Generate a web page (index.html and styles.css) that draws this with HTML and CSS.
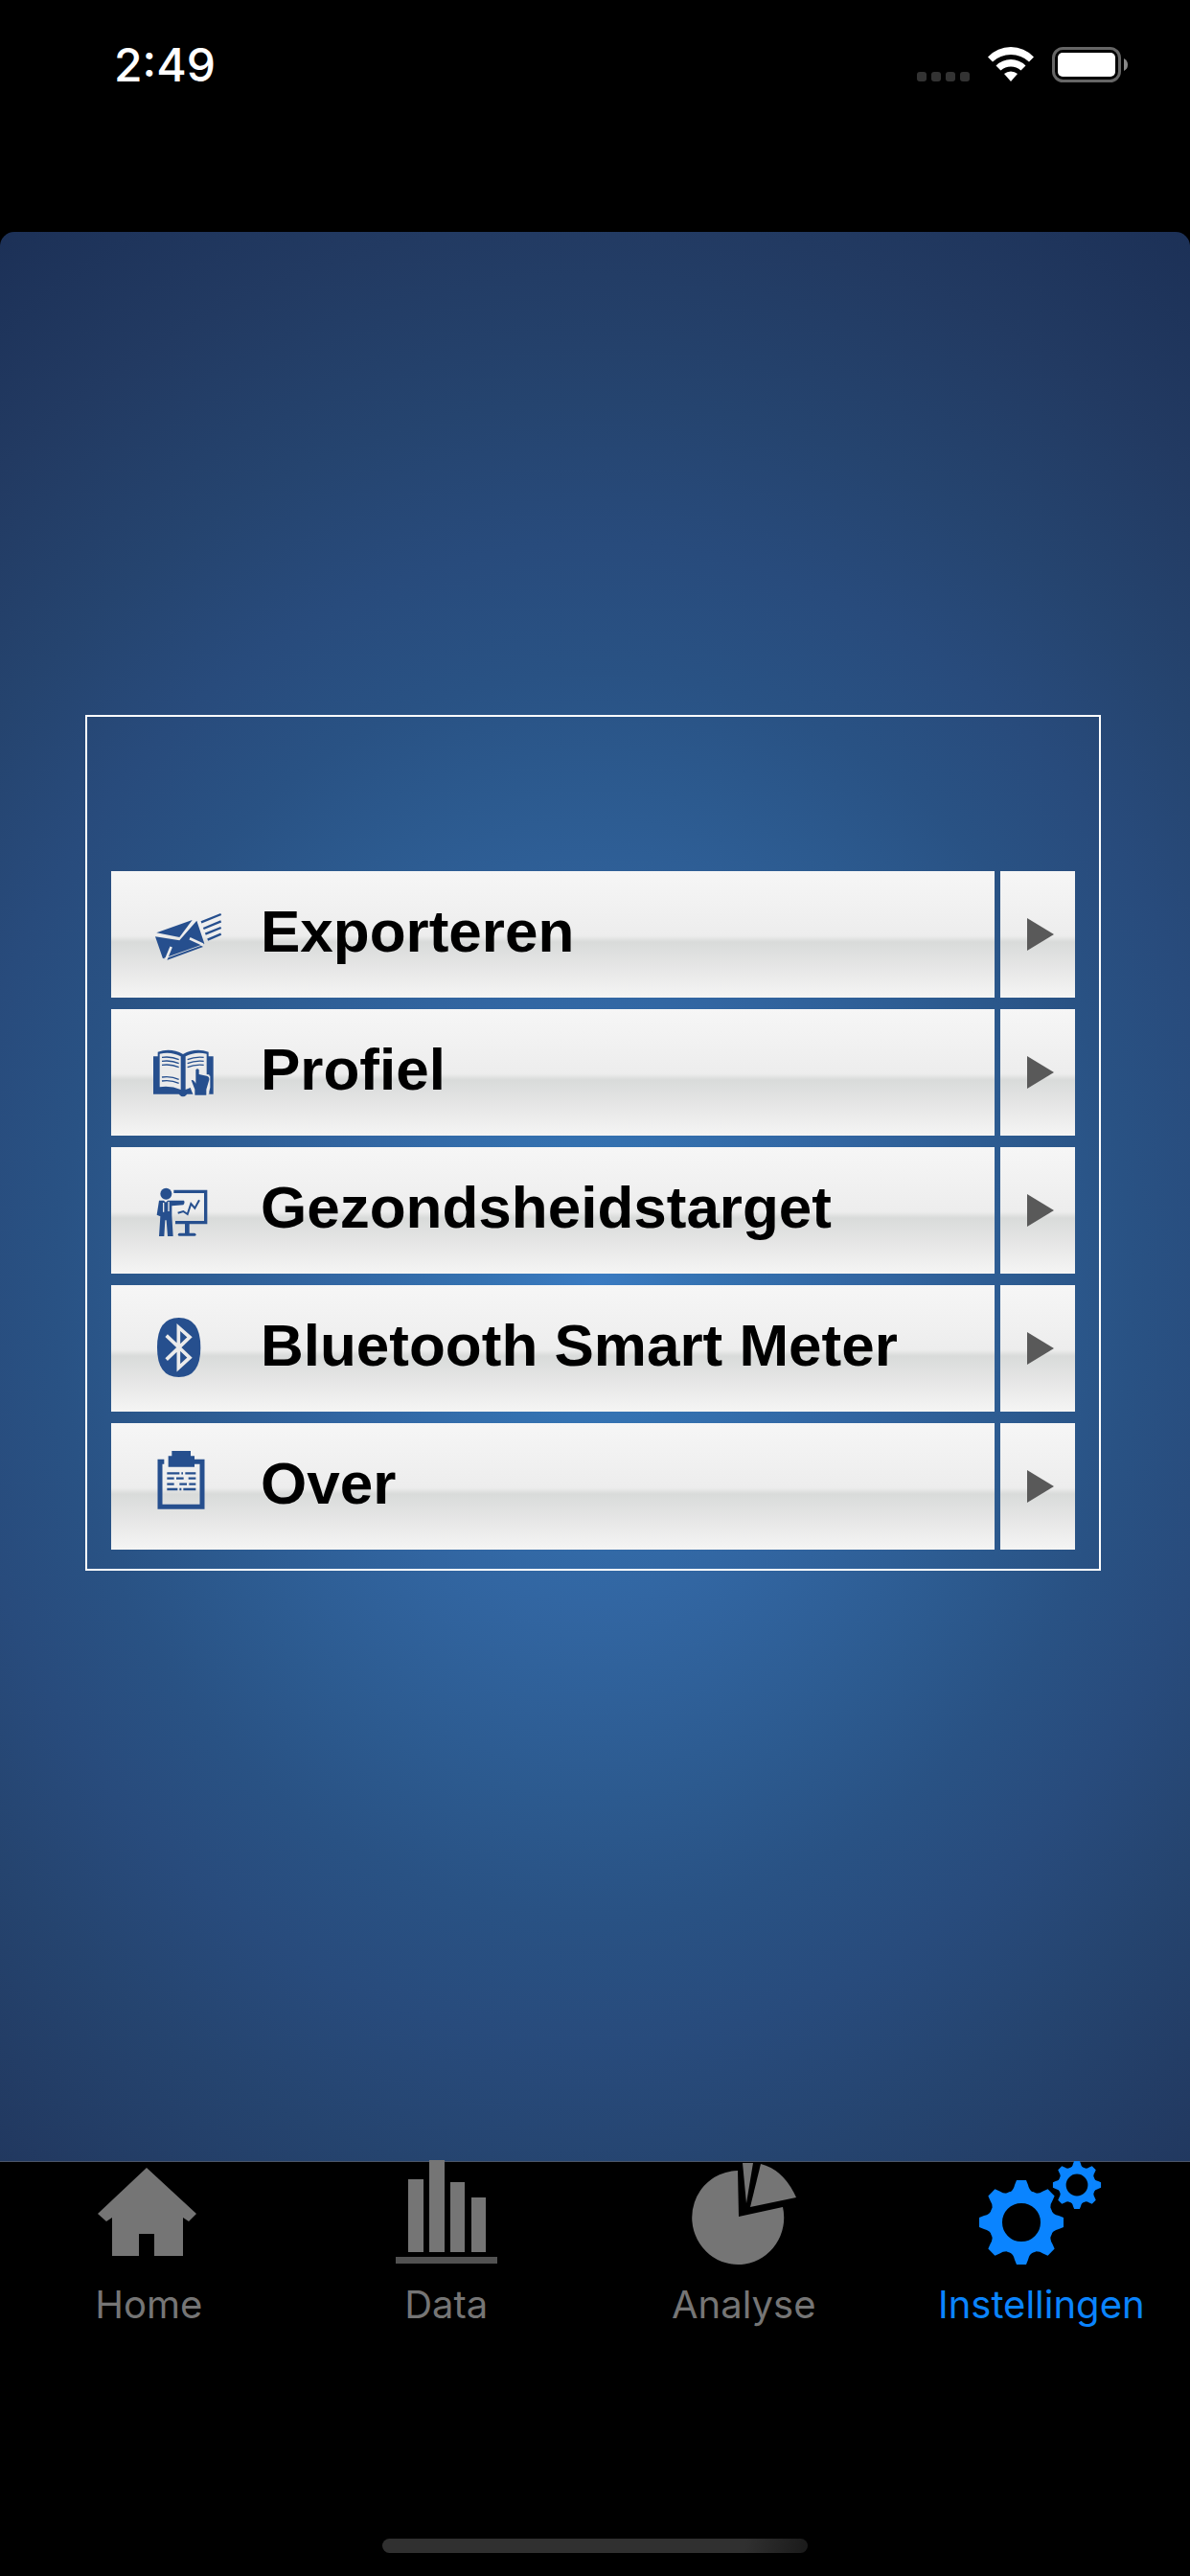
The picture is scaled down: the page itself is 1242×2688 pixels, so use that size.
FILE: index.html
```html
<!DOCTYPE html>
<html lang="nl">
<head>
  <meta charset="UTF-8" />
  <meta name="viewport" content="width=device-width, initial-scale=1" />
  <title>Instellingen</title>
  <link rel="stylesheet" href="styles.css">
</head>
<body>
  <header class="status-bar">
    <span class="time">2:49</span>
    <div class="status-icons">
      <svg class="signal" viewBox="0 0 55 37" aria-hidden="true">
        <rect x="0" y="26" width="10" height="10" rx="3" />
        <rect x="15" y="26" width="10" height="10" rx="3" />
        <rect x="30" y="26" width="10" height="10" rx="3" />
        <rect x="45" y="26" width="10" height="10" rx="3" />
      </svg>
      <svg class="wifi" viewBox="0 0 48 37" aria-hidden="true">
        <path d="M0 10.500Q10 0 24 0T48 10.500L43 15.500Q35 8 24 8T5 15.500Z" />
        <path d="M8.500 19.500Q15 13 24 13T39.500 19.500L34.500 24.500Q30 20.500 24 20.500T13.500 24.500Z" />
        <path d="M17 28Q20 25.500 24 25.500T31 28L24 36Z" />
      </svg>
      <svg class="battery" viewBox="0 0 79 37" aria-hidden="true">
        <rect x="1.500" y="1.500" width="69" height="34" rx="10" fill="none" stroke="#666" stroke-width="3" />
        <rect x="6" y="6" width="60" height="25" rx="5" fill="#fff" />
        <path d="M75 12Q79 14 79 18.500T75 25Z" fill="#8a8a8a" />
      </svg>
    </div>
  </header>

  <main class="content">
    <ul class="menu">
      <li class="menu-row">
        <button type="button" class="menu-button">
          <svg class="menu-icon" viewBox="84 48 234 234" aria-hidden="true">
            <path d="M100 160L212 120L172 174Z" />
            <path d="M96 172L172 184L226 122L250 194L120 241Z" />
            <path d="M124 242L240 200L246 204L134 245Z" />
            <path class="cut" stroke-width="8" d="M204 178L246 197M146 204L129 245" />
            <path class="line" stroke-width="7" d="M240 127L302 102M247 147L302 124M253 164L302 144M260 182L302 164" />
          </svg>
          <span class="menu-label">Exporteren</span>
        </button>
        <button type="button" class="menu-arrow" aria-label="Exporteren openen">
          <svg viewBox="0 0 28 34" aria-hidden="true"><path d="M0 0L28 17L0 34Z" /></svg>
        </button>
      </li>
      <li class="menu-row">
        <button type="button" class="menu-button">
          <svg class="menu-icon" viewBox="84 480 234 234" aria-hidden="true">
            <path d="M90 547H104V533Q145 519 183 540Q222 519 263 533V547H278V665H196Q183 681 170 665H90Z" />
            <path class="paper" d="M110 539Q145 530 176 547V651Q145 638 110 643Z" />
            <path class="paper" d="M191 547Q222 530 257 539V604H265V665H214L206 645L191 651Z" />
            <path class="line" stroke-width="4" d="M117 550Q146 546 170 557M117 562Q146 558 170 569M117 574Q146 570 170 581M117 612Q146 608 170 619M117 624Q146 620 170 631M197 557Q220 547 248 550M197 569Q220 559 248 562M197 581Q220 571 248 574" />
            <path class="paper" d="M218 585H238V598L268 608V645L260 670H217L204 616L218 618Z" />
            <path d="M223 589Q228 583 233 589V603L257 608Q266 609 265 620L256 650V668H220V650L209 622Q215 618 223 632Z" />
          </svg>
          <span class="menu-label">Profiel</span>
        </button>
        <button type="button" class="menu-arrow" aria-label="Profiel openen">
          <svg viewBox="0 0 28 34" aria-hidden="true"><path d="M0 0L28 17L0 34Z" /></svg>
        </button>
      </li>
      <li class="menu-row">
        <button type="button" class="menu-button">
          <svg class="menu-icon" viewBox="84 102 234 234" aria-hidden="true">
            <circle cx="130" cy="167" r="18" />
            <path d="M108 188H123L129 194L135 188H186Q190 195 184 202L148 205V235L152 300H135L131 250H127L124 300H108L112 238L101 233Z" />
            <path class="cut" stroke-width="4" d="M122 195V224M138 192V222" />
            <path class="line" stroke-width="10" d="M154 160H254V257H159" />
            <path class="line" stroke-width="14" d="M196 257V292" />
            <path class="line" stroke-width="9" stroke-linecap="round" d="M172 295H219" />
            <path class="line" stroke-width="6" d="M167 227L184 222L197 231L208 198L220 212L234 187" />
          </svg>
          <span class="menu-label">Gezondsheidstarget</span>
        </button>
        <button type="button" class="menu-arrow" aria-label="Gezondsheidstarget openen">
          <svg viewBox="0 0 28 34" aria-hidden="true"><path d="M0 0L28 17L0 34Z" /></svg>
        </button>
      </li>
      <li class="menu-row">
        <button type="button" class="menu-button">
          <svg class="menu-icon" viewBox="84 531 234 234" aria-hidden="true">
            <path d="M170 552Q238 552 238 645T170 738Q102 738 102 645T170 552Z" />
            <path class="cut" stroke-width="11" d="M131 608L204 677L169 709V582L204 613L131 683" />
          </svg>
          <span class="menu-label">Bluetooth Smart Meter</span>
        </button>
        <button type="button" class="menu-arrow" aria-label="Bluetooth Smart Meter openen">
          <svg viewBox="0 0 28 34" aria-hidden="true"><path d="M0 0L28 17L0 34Z" /></svg>
        </button>
      </li>
      <li class="menu-row">
        <button type="button" class="menu-button">
          <svg class="menu-icon" viewBox="84 967 234 234" aria-hidden="true">
            <path class="line" stroke-width="15" d="M124 1007H111V1148H243V1007H218" />
            <path d="M148 973H207V989H219V1023H137V989H148Z" />
            <path class="line" stroke-width="7" d="M133 1043H172M178 1043H183M190 1043H223M133 1059H155M162 1059H185M200 1059H223M133 1077H155M172 1077H195M202 1077H223M133 1093H166M172 1093H178M184 1093H223" />
          </svg>
          <span class="menu-label">Over</span>
        </button>
        <button type="button" class="menu-arrow" aria-label="Over openen">
          <svg viewBox="0 0 28 34" aria-hidden="true"><path d="M0 0L28 17L0 34Z" /></svg>
        </button>
      </li>
    </ul>
  </main>

  <footer class="bottom-bar">
    <nav class="tabs">
      <a href="#home" class="tab">
        <svg viewBox="0 0 132 108" aria-hidden="true">
          <path d="M64 6L116 54L108 62L102 58V98H72V75H56V98H28V58L22 62L13 54Z" />
        </svg>
        <span>Home</span>
      </a>
      <a href="#data" class="tab">
        <svg viewBox="0 0 132 108" aria-hidden="true">
          <path d="M26 18H42V94H26ZM48 -2H64V94H48ZM70 21H85V94H70ZM92 37H107V94H92Z" />
          <path opacity="0.7" d="M13 99H119V106H13Z" />
        </svg>
        <span>Data</span>
      </a>
      <a href="#analyse" class="tab">
        <svg viewBox="0 0 132 108" aria-hidden="true">
          <path d="M60 9A48 49 0 1 0 107 47L61 57Z" />
          <path d="M65 1H76L69 43Z" />
          <path d="M84 2Q108 8 121 37L73 47Z" />
        </svg>
        <span>Analyse</span>
      </a>
      <a href="#instellingen" class="tab active">
        <svg viewBox="0 0 132 108" aria-hidden="true">
          <defs>
            <path id="tooth" d="M-15 -29Q-8 -33 -7 -39L-5 -44H5L7 -39Q8 -33 15 -29Z" />
            <g id="gear">
              <circle r="27" fill="none" stroke="currentColor" stroke-width="14" />
              <use href="#tooth" />
              <use href="#tooth" transform="rotate(45)" />
              <use href="#tooth" transform="rotate(90)" />
              <use href="#tooth" transform="rotate(135)" />
              <use href="#tooth" transform="rotate(180)" />
              <use href="#tooth" transform="rotate(225)" />
              <use href="#tooth" transform="rotate(270)" />
              <use href="#tooth" transform="rotate(315)" />
            </g>
          </defs>
          <use href="#gear" transform="translate(45 63)" />
          <use href="#gear" transform="translate(103 24) scale(0.57)" />
        </svg>
        <span>Instellingen</span>
      </a>
    </nav>
    <div class="home-indicator"></div>
  </footer>
</body>
</html>
```
FILE: styles.css
```css
* {
  box-sizing: border-box;
}

body {
  margin: 0;
  min-height: 100vh;
  display: flex;
  flex-direction: column;
  background: #000;
  color: #fff;
  font-family: 'Inter', sans-serif;
}

.status-bar {
  display: flex;
  justify-content: space-between;
  align-items: flex-start;
  min-height: 242px;
  padding: 49px 65px 0 119px;
}

.time {
  font-size: 48px;
  line-height: 37px;
  font-weight: 500;
}

.status-icons {
  display: flex;
  gap: 19px;
}

.status-icons svg {
  height: 37px;
}

.signal {
  width: 55px;
  fill: #333;
}

.wifi {
  width: 48px;
  fill: #fff;
}

.battery {
  width: 79px;
}

/* Blue area with the settings menu */
.content {
  flex: 1;
  padding: 504px 93px 0 89px;
  border-radius: 15px 15px 0 0;
  background: radial-gradient(
    94% 67% at 50% 55%,
    #3a7bc2 0%,
    #3471b0 11%,
    #3266a2 24%,
    #2c5a8f 39%,
    #295284 48%,
    #284b7c 58%,
    #25446f 69%,
    #223a62 83%,
    #1b2f55 100%
  );
}

.menu {
  display: flex;
  flex-direction: column;
  gap: 12px;
  margin: 0;
  padding: 161px 25px 20px;
  border: 2px solid #fff;
  list-style: none;
}

.menu-row {
  display: grid;
  grid-template-columns: 1fr 78px;
  gap: 6px;
}

.menu-button,
.menu-arrow {
  display: flex;
  align-items: center;
  height: 132px;
  border: none;
  background: linear-gradient(#f6f6f6, #ededed 51%, #d9dbda 56%, #e7e7e7 78%, #f5f5f4);
  cursor: pointer;
}

.menu-button {
  gap: 36px;
  padding: 0 42px;
  color: #000;
  text-align: left;
}

.menu-label {
  padding-bottom: 6px;
  font: bold 62px/62px 'Liberation Sans', Arial, sans-serif;
}

.menu-icon {
  flex: none;
  width: 78px;
  height: 78px;
  fill: #264f8e;
}

.menu-icon .line {
  fill: none;
  stroke: #264f8e;
}

.menu-icon .cut {
  fill: none;
  stroke: #ebebeb;
}

.menu-icon .paper {
  fill: #ebebeb;
}

.menu-arrow {
  justify-content: center;
  padding: 0 0 0 6px;
}

.menu-arrow svg {
  width: 28px;
  height: 34px;
  fill: #595959;
}

/* Tabs at the bottom */
.bottom-bar {
  display: flex;
  flex-direction: column;
  align-items: center;
  justify-content: space-between;
  min-height: 433px;
  padding-bottom: 24px;
  border-top: 1px solid #4b5568;
}

.tabs {
  display: grid;
  grid-template-columns: repeat(4, 1fr);
  width: 100%;
}

.tab {
  display: flex;
  flex-direction: column;
  align-items: center;
  gap: 18px;
  color: #757575;
  font-size: 40px;
  line-height: 46px;
  font-weight: 400;
  text-decoration: none;
}

.tab svg {
  width: 132px;
  height: 108px;
  fill: currentColor;
  overflow: visible;
}

.tab.active {
  color: #0a84ff;
}

.home-indicator {
  width: 444px;
  height: 15px;
  border-radius: 8px;
  background: linear-gradient(100deg, #303030 85%, #1a1a1a);
}
```
